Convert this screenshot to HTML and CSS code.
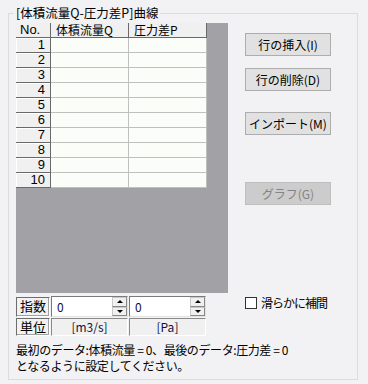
FILE: index.html
```html
<!DOCTYPE html>
<html lang="ja">
<head>
    <meta charset="UTF-8">
    <title>体積流量Q-圧力差P曲線</title>
    <link rel="stylesheet" href="styles.css">
</head>
<body>
    <fieldset class="group">
        <legend>[体積流量Q-圧力差P]曲線</legend>
        <div class="layout">
            <!-- データグリッド -->
            <div class="grid-area">
                <table class="grid">
                    <thead>
                        <tr><th class="no">No.</th><th>体積流量Q</th><th>圧力差P</th></tr>
                    </thead>
                    <tbody>
                        <tr><th class="rh">1</th><td></td><td></td></tr>
                        <tr><th class="rh">2</th><td></td><td></td></tr>
                        <tr><th class="rh">3</th><td></td><td></td></tr>
                        <tr><th class="rh">4</th><td></td><td></td></tr>
                        <tr><th class="rh">5</th><td></td><td></td></tr>
                        <tr><th class="rh">6</th><td></td><td></td></tr>
                        <tr><th class="rh">7</th><td></td><td></td></tr>
                        <tr><th class="rh">8</th><td></td><td></td></tr>
                        <tr><th class="rh">9</th><td></td><td></td></tr>
                        <tr><th class="rh">10</th><td></td><td></td></tr>
                    </tbody>
                </table>
            </div>

            <!-- 操作ボタン -->
            <div class="buttons">
                <button class="btn b-insert">行の挿入(I)</button>
                <button class="btn b-delete">行の削除(D)</button>
                <button class="btn b-import">インポート(M)</button>
                <button class="btn b-graph" disabled>グラフ(G)</button>
            </div>

            <!-- 指数・単位 -->
            <div class="params">
                <div class="cap">指数</div>
                <div class="spin"><span class="val">0</span><span class="arrows"><span class="up"></span><span class="down"></span></span></div>
                <div class="spin"><span class="val">0</span><span class="arrows"><span class="up"></span><span class="down"></span></span></div>
                <div class="cap">単位</div>
                <div class="unit">[m3/s]</div>
                <div class="unit">[Pa]</div>
            </div>

            <label class="smooth"><span class="check"></span>滑らかに補間</label>

            <p class="note">最初のデータ:体積流量 = 0、最後のデータ:圧力差 = 0<br>となるように設定してください。</p>
        </div>
    </fieldset>
</body>
</html>
```

FILE: styles.css
```css
html, body {
    margin: 0;
    padding: 0;
    width: 368px;
    height: 384px;
    overflow: hidden;
    background-color: #f2f1f4;
    font-family: "Noto Sans CJK JP", "Liberation Sans", sans-serif;
    font-size: 12px;
    color: #000;
}
.group {
    margin: 5px 10px 0 8px;
    padding: 0 0 0 7px;
    width: 350px;
    height: 375px;
    box-sizing: border-box;
    border: 1px solid #dcdcdc;
}
.group legend {
    margin-left: -2px;
    padding: 0 2px;
    font-size: 12.5px;
    line-height: 16px;
    height: 16px;
}
.layout {
    display: grid;
    grid-template-columns: 212px 86px;
    column-gap: 17px;
    margin-top: 2px;
}
/* グリッド */
.grid-area {
    height: 270px;
    background-color: #a2a1a5;
}
.grid {
    border-collapse: separate;
    border-spacing: 0;
    table-layout: fixed;
    width: 191px;
}
.grid th, .grid td {
    height: 15px;
    box-sizing: border-box;
    padding: 0;
    line-height: 14px;
    font-weight: normal;
    white-space: nowrap;
}
.grid thead th {
    width: 78px;
    text-align: left;
    padding-left: 5px;
    background-color: #f0f0f0;
    border-right: 1px solid #696969;
    border-bottom: 1px solid #696969;
}
.grid thead th.no {
    width: 35px;
    padding-left: 4px;
    font-family: "Liberation Sans", sans-serif;
    font-size: 13px;
}
.grid .rh {
    text-align: right;
    padding-right: 5px;
    font-family: "Liberation Sans", sans-serif;
    font-size: 13px;
    background-color: #f0f0f0;
    border-right: 1px solid #696969;
    border-bottom: 1px solid #696969;
    box-shadow: inset 1px 1px 0 #fff;
}
.grid td {
    background-color: #fbfdf9;
    border-right: 1px solid #c0c0c0;
    border-bottom: 1px solid #c0c0c0;
}
/* ボタン */
.buttons {
    display: flex;
    flex-direction: column;
    padding-top: 10px;
}
.btn {
    width: 86px;
    height: 23px;
    padding: 0;
    font-family: inherit;
    font-size: 12px;
    line-height: 16px;
    color: #000;
    background-color: #e1e1e1;
    border: 1px solid #adadad;
}
.b-delete { margin-top: 12px; }
.b-import { margin-top: 21px; }
.b-graph {
    margin-top: 47px;
    background-color: #cccccc;
    border-color: #bfbfbf;
    color: #838383;
}
/* 指数・単位 */
.params {
    display: grid;
    grid-template-columns: 34px 77px 77px;
    grid-template-rows: 21px 18px;
    column-gap: 1px;
    row-gap: 1px;
    margin-top: 3px;
}
.cap {
    box-sizing: border-box;
    border: 1px solid;
    border-color: #6d6d6d #ffffff #ffffff #6d6d6d;
    box-shadow: inset -1px -1px 0 #a0a0a0;
    padding-left: 3px;
    line-height: 16px;
    font-size: 13px;
}
.params .cap:first-child {
    margin-top: 1px;
}
.spin {
    display: flex;
    box-sizing: border-box;
    background-color: #fff;
    border: 1px solid;
    border-color: #7a7a7a #e3e3e3 #e3e3e3 #7a7a7a;
}
.spin .val {
    flex: 1;
    padding-left: 5px;
    line-height: 19px;
    color: #101040;
}
.arrows {
    display: flex;
    flex-direction: column;
    width: 15px;
}
.arrows span {
    flex: 1;
    position: relative;
    background-color: #f0f0f0;
    border: 1px solid #c8c8c8;
    border-right-color: #888;
    border-bottom-color: #888;
}
.arrows .up::after, .arrows .down::after {
    content: "";
    position: absolute;
    left: 4px;
    top: 2px;
    border-left: 3px solid transparent;
    border-right: 3px solid transparent;
}
.arrows .up::after {
    border-bottom: 3px solid #000;
}
.arrows .down::after {
    border-top: 3px solid #000;
}
.unit {
    box-sizing: border-box;
    border: 1px solid;
    border-color: #8a8a8a #ffffff #ffffff #8a8a8a;
    background-color: #f0f0f0;
    text-align: center;
    line-height: 16px;
    color: #101040;
}
/* チェックボックス */
.smooth {
    display: flex;
    align-items: center;
    margin-top: 3px;
    align-self: start;
    line-height: 14px;
    white-space: nowrap;
    letter-spacing: -1px;
}
.check {
    width: 12px;
    height: 12px;
    box-sizing: border-box;
    border: 1px solid #333;
    background-color: #fff;
    margin-right: 4px;
}
/* 説明 */
.note {
    grid-column: 1 / 3;
    margin: 6px 0 0;
    line-height: 16px;
    white-space: nowrap;
    letter-spacing: -0.4px;
}
```
